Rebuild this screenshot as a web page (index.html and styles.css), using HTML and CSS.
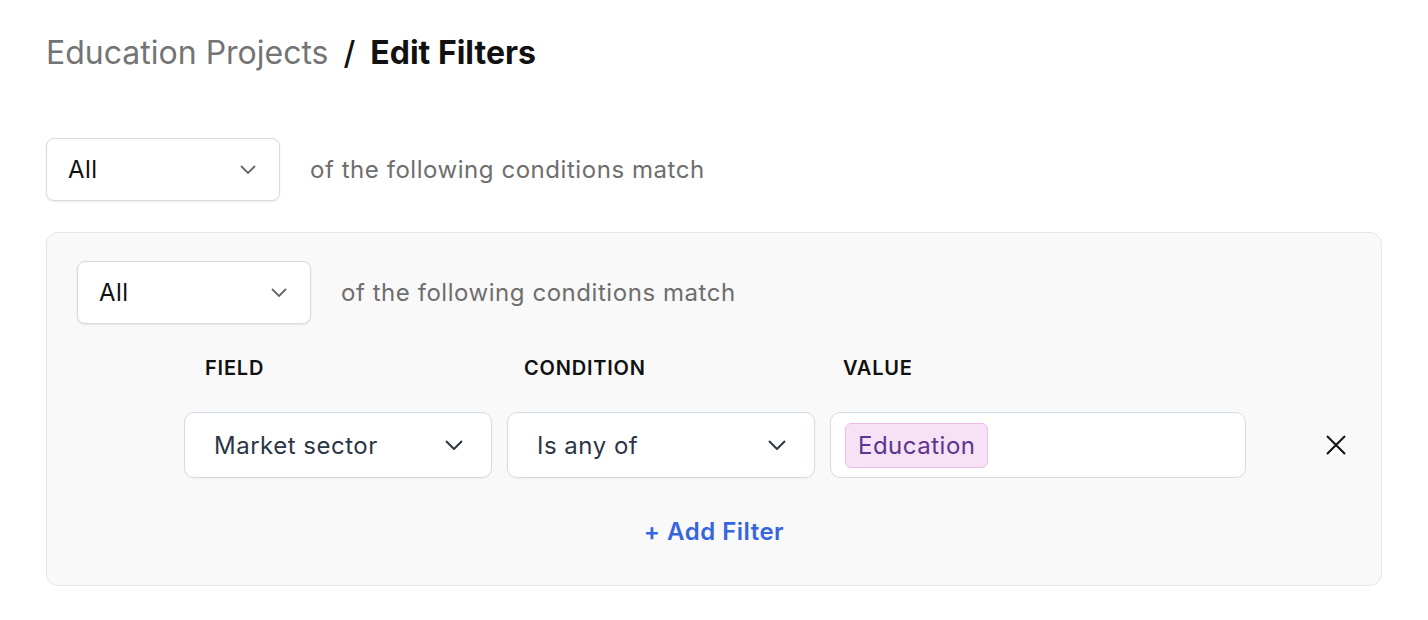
FILE: index.html
```html
<!DOCTYPE html>
<html>
<head>
  <meta name="viewport" content="width=device-width, initial-scale=1">
  <link rel="stylesheet" href="styles.css">
</head>
<body>
  <div class="page">
    <h1 class="crumbs">
      <span class="crumb-parent">Education Projects</span>
      <span class="crumb-sep">/</span>
      <span class="crumb-current">Edit Filters</span>
    </h1>

    <div class="match-row">
      <div class="select select-small">
        <span>All</span>
        <svg class="chev" width="16" height="9" viewBox="0 0 16 9"><path d="M1 1l7 7 7-7" fill="none" stroke="currentColor" stroke-width="1.8"/></svg>
      </div>
      <span class="match-text">of the following conditions match</span>
    </div>

    <div class="group">
      <div class="match-row">
        <div class="select select-small">
          <span>All</span>
          <svg class="chev" width="16" height="9" viewBox="0 0 16 9"><path d="M1 1l7 7 7-7" fill="none" stroke="currentColor" stroke-width="1.8"/></svg>
        </div>
        <span class="match-text">of the following conditions match</span>
      </div>

      <div class="field-heads">
        <span>Field</span>
        <span>Condition</span>
        <span>Value</span>
      </div>

      <div class="filter-row">
        <div class="select select-field">
          <span>Market sector</span>
          <svg class="chev" width="18" height="10" viewBox="0 0 18 10"><path d="M1 1l8 8 8-8" fill="none" stroke="currentColor" stroke-width="2"/></svg>
        </div>
        <div class="select select-field">
          <span>Is any of</span>
          <svg class="chev" width="18" height="10" viewBox="0 0 18 10"><path d="M1 1l8 8 8-8" fill="none" stroke="currentColor" stroke-width="2"/></svg>
        </div>
        <div class="value-box">
          <span class="chip">Education</span>
        </div>
        <button class="remove" aria-label="Remove">
          <svg width="20" height="20" viewBox="0 0 20 20"><path d="M1 1l18 18M19 1L1 19" stroke="currentColor" stroke-width="2" fill="none"/></svg>
        </button>
      </div>

      <div class="add-row">
        <a class="add-filter">+ Add Filter</a>
      </div>
    </div>
  </div>
</body>
</html>
```

FILE: styles.css
```css
body {
  margin: 0;
  font-family: Inter, "Noto Sans", sans-serif;
  background: #fff;
  color: #111;
}

.page { padding: 34px 46px 0; }

.crumbs {
  margin: 0;
  font-size: 32px;
  line-height: 38px;
  font-weight: 400;
  display: flex;
  gap: 15px;
}
.crumb-parent  { color: #747474; }
.crumb-sep     { color: #111; font-weight: 500; }
.crumb-current { color: #111; font-weight: 700; }

.match-row {
  display: flex;
  align-items: center;
  gap: 30px;
}
.page > .match-row { margin-top: 66px; }

.select {
  display: flex;
  align-items: center;
  justify-content: space-between;
  box-sizing: border-box;
  background: #fff;
  font-size: 24px;
  letter-spacing: 0.5px;
}
.select-small {
  width: 234px;
  height: 63px;
  padding: 0 23px 0 21px;
  border: 1px solid #dadada;
  border-radius: 8px;
  box-shadow: 0 1px 2px rgba(0, 0, 0, 0.08);
  color: #111;
}
.select-small .chev { color: #666; }

.match-text { font-size: 24px; letter-spacing: 0.55px; color: #6e6e6e; }

.group {
  margin-top: 31px;
  background: #f9f9f9;
  border: 1px solid #e6e6e6;
  border-radius: 12px;
  padding: 28px 30px 38px;
}

.field-heads {
  display: grid;
  grid-template-columns: repeat(3, 319px);
  padding-left: 128px;
  margin-top: 32px;
  font-size: 20px;
  line-height: 24px;
  font-weight: 600;
  letter-spacing: 0.8px;
  text-transform: uppercase;
  color: #111;
}

.filter-row {
  display: flex;
  align-items: center;
  gap: 15px;
  margin-top: 32px;
  padding-left: 107px;
}
.select-field {
  width: 308px;
  height: 66px;
  padding: 0 28px 0 29px;
  border: 1px solid #d3dbe8;
  border-radius: 10px;
  box-shadow: 0 1px 2px rgba(0, 0, 0, 0.04);
  color: #2d3646;
}
.select-field .chev { color: #2d3646; }

.value-box {
  width: 416px;
  height: 66px;
  box-sizing: border-box;
  display: flex;
  align-items: center;
  padding-left: 14px;
  background: #fff;
  border: 1px solid #d3dbe8;
  border-radius: 10px;
}
.chip {
  box-sizing: border-box;
  height: 45px;
  display: flex;
  align-items: center;
  padding: 0 12px;
  font-size: 24px;
  letter-spacing: 0.5px;
  color: #5b3590;
  background: #f6e1f5;
  border: 1px solid #efbbec;
  border-radius: 6px;
}

.remove {
  margin-left: 65px;
  background: none;
  border: 0;
  padding: 0;
  width: 20px;
  height: 20px;
  color: #111;
  cursor: pointer;
  display: flex;
}

.add-row {
  display: flex;
  justify-content: center;
  margin-top: 39px;
}
.add-filter {
  font-size: 24px;
  line-height: 30px;
  font-weight: 600;
  letter-spacing: 0.5px;
  color: #3565df;
  cursor: pointer;
}
```
